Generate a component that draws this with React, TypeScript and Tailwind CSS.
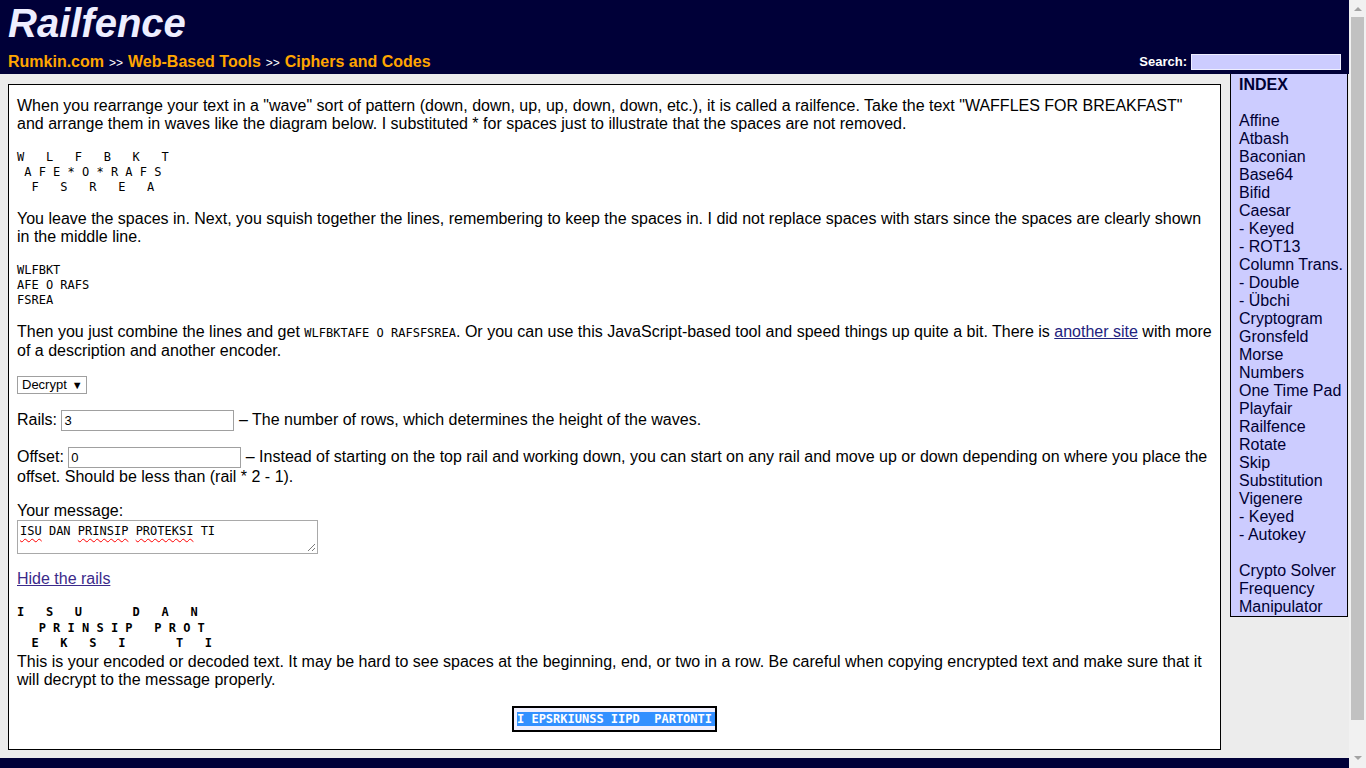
const SANS = "font-['Liberation_Sans',Arial,sans-serif]";
const MONO = "font-['DejaVu_Sans_Mono',monospace]";

const INDEX = [
  "Affine", "Atbash", "Baconian", "Base64", "Bifid", "Caesar", "- Keyed", "- ROT13",
  "Column Trans.", "- Double", "- Übchi", "Cryptogram", "Gronsfeld", "Morse", "Numbers",
  "One Time Pad", "Playfair", "Railfence", "Rotate", "Skip", "Substitution", "Vigenere",
  "- Keyed", "- Autokey",
];
const TOOLS = ["Crypto Solver", "Frequency", "Manipulator"];

const WAVE = ["W   L   F   B   K   T", " A F E * O * R A F S", "  F   S   R   E   A"];
const SQUISHED = ["WLFBKT", "AFE O RAFS", "FSREA"];

const MESSAGE = "ISU DAN PRINSIP PROTEKSI TI";
const RAILS = 3;

// place the ciphertext on the rails, then read it back in zigzag order
function decryptRails(text: string, rails: number) {
  const n = text.length;
  const cycle = 2 * (rails - 1);
  const railOf = Array.from({ length: n }, (_, i) => {
    const m = i % cycle;
    return m < rails ? m : cycle - m;
  });
  const rows = Array.from({ length: rails }, () => Array<string>(n).fill(" "));
  let k = 0;
  for (let r = 0; r < rails; r++)
    for (let i = 0; i < n; i++) if (railOf[i] === r) rows[r][i] = text[k++];
  const out = railOf.map((r, i) => rows[r][i]).join("");
  return { rows: rows.map((r) => r.join("").replace(/\s+$/, "")), out };
}

function Header() {
  return (
    <header className="bg-[#000038] px-2 pb-[3px]">
      <h1 className="text-[40px] leading-[46px] font-bold italic text-[#eeeeff]">Railfence</h1>
      <div className="mt-[7px] flex h-[18px] items-center justify-between">
        <nav className="flex items-baseline text-[16px] leading-[18px] font-bold text-[#ffa500]">
          <a href="#">Rumkin.com</a>
          <span className="mx-[5px] text-[12px] font-normal text-white">&gt;&gt;</span>
          <a href="#">Web-Based Tools</a>
          <span className="mx-[5px] text-[12px] font-normal text-white">&gt;&gt;</span>
          <a href="#">Ciphers and Codes</a>
        </nav>
        <form className="flex items-center gap-[4px]">
          <label className="text-[13px] font-bold text-white">Search:</label>
          <input className="h-[16px] w-[150px] border border-[#eeeeff] bg-[#ccccff]" />
        </form>
      </div>
    </header>
  );
}

function Sidebar() {
  return (
    <aside className="w-[118px] shrink-0 border-x border-b border-black bg-[#ccccff] pl-[8px] pt-[2px] text-[16px] leading-[18px] text-[#000033]">
      <div className="font-bold">INDEX</div>
      <div className="h-[18px]" />
      {INDEX.map((name, i) => (
        <a key={i} href="#" className="block whitespace-nowrap">
          {name}
        </a>
      ))}
      <div className="h-[18px]" />
      {TOOLS.map((name) => (
        <a key={name} href="#" className="block whitespace-nowrap">
          {name}
        </a>
      ))}
    </aside>
  );
}

function Field({ label, value }: { label: string; value: string }) {
  return (
    <>
      {label}{" "}
      <input
        readOnly
        value={value}
        className="h-[21px] w-[173px] border border-[#a0a0a0] bg-white px-[2px] align-baseline text-[13px]"
      />{" "}
    </>
  );
}

export default function App() {
  const { rows, out } = decryptRails(MESSAGE, RAILS);
  const squiggle = "underline decoration-wavy decoration-[#ff0000] decoration-1 underline-offset-[3px]";

  return (
    <div className={`flex h-screen overflow-hidden bg-[#ececec] text-black ${SANS}`}>
      <div className="flex w-[1349px] shrink-0 flex-col">
        <Header />

        <div className="flex items-start">
          <main className="ml-[8px] mr-[9px] mt-[10px] flex-1 border border-black bg-white px-[8px] pb-[17px] pt-[12px] text-[16px] leading-[18px]">
            <p>
              When you rearrange your text in a "wave" sort of pattern (down, down, up, up, down, down,
              etc.), it is called a railfence. Take the text "WAFFLES FOR BREAKFAST" and arrange them in
              waves like the diagram below. I substituted * for spaces just to illustrate that the spaces
              are not removed.
            </p>
            <pre className={`mt-[17px] whitespace-pre text-[12px] leading-[15px] ${MONO}`}>{WAVE.join("\n")}</pre>
            <p className="mt-[15px]">
              You leave the spaces in. Next, you squish together the lines, remembering to keep the spaces
              in. I did not replace spaces with stars since the spaces are clearly shown in the middle line.
            </p>
            <pre className={`mt-[17px] whitespace-pre text-[12px] leading-[15px] ${MONO}`}>{SQUISHED.join("\n")}</pre>
            <p className="mt-[15px]">
              Then you just combine the lines and get{" "}
              <tt className={`whitespace-pre text-[12px] ${MONO}`}>WLFBKTAFE O RAFSFSREA</tt>. Or you can
              use this JavaScript-based tool and speed things up quite a bit. There is{" "}
              <a href="#" className="text-[#23237e] underline">another site</a> with more of a description
              and another encoder.
            </p>

            <div className="mt-4 flex">
              <div className="flex h-[18px] w-[70px] items-center gap-[5px] border border-[#a0a0a0] bg-white pl-[4px] text-[13px]">
                Decrypt <span className="text-[11px]">▼</span>
              </div>
            </div>

            <p className="mt-[15px] leading-[21px]">
              <Field label="Rails:" value="3" />– The number of rows, which determines the height of the
              waves.
            </p>
            <p className="mt-4">
              <Field label="Offset:" value="0" />– Instead of starting on the top rail and working down,
              you can start on any rail and move up or down depending on where you place the offset. Should
              be less than (rail * 2 - 1).
            </p>

            <div className="mt-4">
              <div>Your message:</div>
              <div className={`relative h-[34px] w-[301px] border border-[#a9a9a9] px-[2px] pt-[3px] text-[12px] leading-[14px] whitespace-pre ${MONO}`}>
                <span className={squiggle}>ISU</span> DAN <span className={squiggle}>PRINSIP</span>{" "}
                <span className={squiggle}>PROTEKSI</span> TI
                <svg className="absolute bottom-[1px] right-[1px]" width="9" height="9" viewBox="0 0 9 9">
                  <path d="M8 1 L1 8 M8 5 L5 8" stroke="#7a7a7a" strokeWidth="1" />
                </svg>
              </div>
            </div>

            <p className="mt-4">
              <a href="#" className="text-[#3b2a8a] underline">Hide the rails</a>
            </p>

            <pre className={`mt-[17px] whitespace-pre text-[12px] font-bold leading-[15.5px] ${MONO}`}>{rows.join("\n")}</pre>
            <p className="mt-[1px]">
              This is your encoded or decoded text. It may be hard to see spaces at the beginning, end, or
              two in a row. Be careful when copying encrypted text and make sure that it will decrypt to
              the message properly.
            </p>

            <div className="mt-[17px] flex justify-center">
              <div className="flex border-2 border-black bg-[#f0f0ff] pb-[4px] pl-[3px] pt-[4px]">
                <span className={`whitespace-pre bg-[#3390ff] pr-[3px] text-[12px] font-bold leading-[14px] text-white ${MONO}`}>
                  {out}
                </span>
              </div>
            </div>
          </main>

          <Sidebar />
          <div className="w-px shrink-0" />
        </div>

        <footer className="mt-[8px] flex-1 bg-[#000038]" />
      </div>

      {/* window scrollbar as seen in the screenshot */}
      <div className="flex w-[17px] shrink-0 flex-col items-center bg-[#f1f1f1]">
        <svg className="mt-[7px]" width="8" height="4" viewBox="0 0 8 4">
          <path d="M0 4 L4 0 L8 4 Z" fill="#a3a3a3" />
        </svg>
        <div className="mt-[6px] h-[703px] w-[13px] bg-[#c1c1c1]" />
        <div className="flex-1" />
        <svg className="mb-[8px]" width="8" height="4" viewBox="0 0 8 4">
          <path d="M0 0 L8 0 L4 4 Z" fill="#a3a3a3" />
        </svg>
      </div>
    </div>
  );
}
